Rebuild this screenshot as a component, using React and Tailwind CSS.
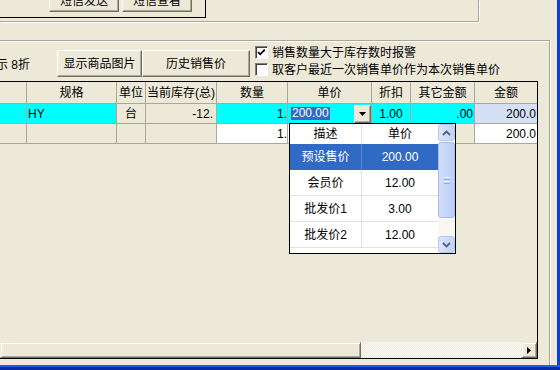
import React from 'react';

// classic raised 3D button face
function Raised({ className = '', children }) {
  return (
    <div className={`flex shrink-0 items-center justify-center border border-white border-r-[#716F64] border-b-[#716F64] bg-[#ECE9D8] shadow-[inset_-1px_-1px_0_#ACA899] ${className}`}>
      {children}
    </div>
  );
}

function Cell({ w, bg = 'bg-[#ECE9D8]', align = 'justify-center', edge = true, className = '', children }) {
  return (
    <div className={`flex shrink-0 items-center overflow-hidden whitespace-nowrap border-b border-[#ACA899] ${edge ? 'border-r' : ''} ${w} ${bg} ${align} ${className}`}>
      {children}
    </div>
  );
}

function Check({ checked }) {
  return (
    <div className="h-[13px] w-[13px] shrink-0 border border-[#808080] border-r-white border-b-white bg-white shadow-[inset_1px_1px_0_#404040]">
      {checked && (
        <svg width="11" height="11" viewBox="0 0 11 11">
          <path d="M2 5 L4.2 7.3 L8.8 2.6" fill="none" stroke="#000" strokeWidth="1.8" />
        </svg>
      )}
    </div>
  );
}

function LunaBtn({ dir }) {
  return (
    <div className="flex h-[17px] shrink-0 items-center justify-center rounded-[3px] border border-[#B7C9F2] bg-linear-to-r from-[#DCE6FC] to-[#C1D2F8]">
      <svg width="9" height="6" viewBox="0 0 9 6">
        <path d={dir === 'up' ? 'M1 5 L4.5 1.5 L8 5' : 'M1 1 L4.5 4.5 L8 1'} fill="none" stroke="#4D6185" strokeWidth="1.8" />
      </svg>
    </div>
  );
}

const PRICES = [
  { name: '预设售价', price: '200.00', on: true },
  { name: '会员价', price: '12.00' },
  { name: '批发价1', price: '3.00' },
  { name: '批发价2', price: '12.00' },
];

function PriceDrop() {
  return (
    <div className="absolute left-[289px] top-[41px] flex h-[131px] w-[167px] border border-black bg-white">
      <div className="flex w-[148px] flex-col">
        <div className="flex h-[20px] shrink-0">
          <div className="flex w-[72px] items-center justify-center border-r border-[#E2E2E2]">描述</div>
          <div className="flex flex-1 items-center justify-center">单价</div>
        </div>
        {PRICES.map(p => (
          <div key={p.name} className={`flex h-[26px] shrink-0 border-b ${p.on ? 'border-[#316AC5] bg-[#316AC5] text-white' : 'border-[#E2E2E2]'}`}>
            <div className={`flex w-[72px] items-center justify-center border-r ${p.on ? 'border-[#5A86D0]' : 'border-[#E2E2E2]'}`}>{p.name}</div>
            <div className="flex flex-1 items-center justify-center">{p.price}</div>
          </div>
        ))}
      </div>
      <div className="flex w-[17px] flex-col bg-[#F7F6F1]">
        <LunaBtn dir="up" />
        <div className="mt-px flex h-[76px] shrink-0 flex-col items-center justify-center gap-[1px] rounded-[3px] border border-[#A9BDE9] bg-linear-to-r from-[#D2DFFB] to-[#BCCEF8]">
          <div className="h-px w-[6px] bg-[#EEF4FE]" />
          <div className="h-px w-[6px] bg-[#8CACE8]" />
          <div className="h-px w-[6px] bg-[#EEF4FE]" />
          <div className="h-px w-[6px] bg-[#8CACE8]" />
        </div>
        <div className="flex-1" />
        <LunaBtn dir="down" />
      </div>
    </div>
  );
}

function Grid() {
  return (
    <div className="relative flex h-[278px] w-[538px] shrink-0 flex-col border-t border-r border-b border-black">
      {/* header */}
      <div className="flex h-[22px] shrink-0">
        <Cell w="w-[27px]" />
        <Cell w="w-[90px]">规格</Cell>
        <Cell w="w-[29px]">单位</Cell>
        <Cell w="w-[71px]">当前库存(总)</Cell>
        <Cell w="w-[71px]">数量</Cell>
        <Cell w="w-[84px]">单价</Cell>
        <Cell w="w-[39px]">折扣</Cell>
        <Cell w="w-[64px]">其它金额</Cell>
        <Cell w="w-[62px]" edge={false}>金额</Cell>
      </div>
      {/* row 1 */}
      <div className="flex h-[20px] shrink-0">
        <Cell w="w-[27px]" bg="bg-[#00FFFF]" />
        <Cell w="w-[90px]" bg="bg-[#00FFFF]" align="justify-start" className="pl-[1px]">HY</Cell>
        <Cell w="w-[29px]">台</Cell>
        <Cell w="w-[71px]" align="justify-end" className="pr-[3px]">-12.</Cell>
        <Cell w="w-[71px]" bg="bg-[#00FFFF]" align="justify-end">1.</Cell>
        <Cell w="w-[84px]" bg="bg-[#00FFFF]" align="justify-start" className="pl-[3px]">
          <span className="bg-[#316AC5] px-px leading-[13px] text-white">200.00</span>
          <div className="flex-1" />
          <Raised className="h-[18px] w-[17px]">
            <svg width="7" height="4" viewBox="0 0 7 4"><path d="M0 0 H7 L3.5 4 Z" fill="#000" /></svg>
          </Raised>
        </Cell>
        <Cell w="w-[39px]" bg="bg-[#00FFFF]">1.00</Cell>
        <Cell w="w-[64px]" bg="bg-[#00FFFF]" align="justify-end" className="pr-px">.00</Cell>
        <Cell w="w-[62px]" bg="bg-[#D4E0F5]" align="justify-end" edge={false} className="pr-px">200.0</Cell>
      </div>
      {/* row 2 */}
      <div className="flex h-[20px] shrink-0">
        <Cell w="w-[27px]" />
        <Cell w="w-[90px]" />
        <Cell w="w-[29px]" />
        <Cell w="w-[71px]" />
        <Cell w="w-[71px]" bg="bg-white" align="justify-end">1.</Cell>
        <Cell w="w-[84px]" bg="bg-white" />
        <Cell w="w-[39px]" />
        <Cell w="w-[64px]" />
        <Cell w="w-[62px]" bg="bg-white" align="justify-end" edge={false} className="pr-px">200.0</Cell>
      </div>
      <div className="flex-1" />
      {/* horizontal scroll bar */}
      <div className="flex h-[16px] shrink-0">
        <div className="w-[361px] border border-[#ECE9D8] border-r-[#716F64] border-b-[#716F64] bg-[#ECE9D8] shadow-[inset_1px_1px_0_#fff,inset_-1px_-1px_0_#ACA899]" />
        <div className="flex-1 bg-[repeating-conic-gradient(#fff_0_25%,#ECE9D8_0_50%)] bg-size-[2px_2px]" />
        <div className="flex w-[16px] items-center justify-center border border-[#ECE9D8] border-r-[#716F64] border-b-[#716F64] bg-[#ECE9D8] shadow-[inset_1px_1px_0_#fff,inset_-1px_-1px_0_#ACA899]">
          <svg width="4" height="7" viewBox="0 0 4 7"><path d="M0 0 L4 3.5 L0 7 Z" fill="#000" /></svg>
        </div>
      </div>
      <PriceDrop />
    </div>
  );
}

export default function App() {
  return (
    <div className="flex h-[370px] w-[560px] flex-col overflow-hidden bg-[#ECE9D8] font-['Liberation_Sans','Noto_Sans_CJK_SC',sans-serif] text-[12px] leading-[14px] text-black">
      <div className="flex h-[365px] shrink-0">
        <div className="flex w-[557px] flex-col">
          {/* top group boxes, scrolled mostly out of view */}
          <div className="h-[22px] w-[479px] shrink-0 border-r border-b border-[#ACA899] shadow-[1px_1px_0_#fff]">
            <div className="flex h-[18px] w-[206px] gap-[3px] border-r border-b border-black pl-[49px]">
              <Raised className="-mt-[10px] h-[22px] w-[70px]">短信发送</Raised>
              <Raised className="-mt-[10px] h-[22px] w-[70px]">短信查看</Raised>
            </div>
          </div>

          <div className="mt-[18px] flex w-[550px] flex-1 flex-col border-t border-r border-[#ACA899] shadow-[inset_0_1px_0_#fff,1px_0_0_#fff]">
            {/* toolbar */}
            <div className="flex h-[40px] shrink-0 items-start">
              <div className="-ml-[4px] w-[61px] whitespace-nowrap pt-[17px]">示 8折</div>
              <Raised className="mt-[9px] h-[27px] w-[85px]">显示商品图片</Raised>
              <Raised className="mt-[9px] h-[27px] w-[108px]">历史销售价</Raised>
              <div className="ml-[5px] mt-[5px] flex flex-col gap-[4px]">
                <label className="flex h-[13px] items-center gap-[4px] whitespace-nowrap">
                  <Check checked />
                  销售数量大于库存数时报警
                </label>
                <label className="flex h-[13px] items-center gap-[4px] whitespace-nowrap">
                  <Check />
                  取客户最近一次销售单价作为本次销售单价
                </label>
              </div>
            </div>
            <Grid />
          </div>
        </div>
        <div className="w-[3px] bg-[#0A3FD6]" />
      </div>
      <div className="h-[2px] shrink-0 bg-[#1E5FE6]" />
      <div className="h-[3px] shrink-0 bg-[#0A2BA8]" />
    </div>
  );
}
